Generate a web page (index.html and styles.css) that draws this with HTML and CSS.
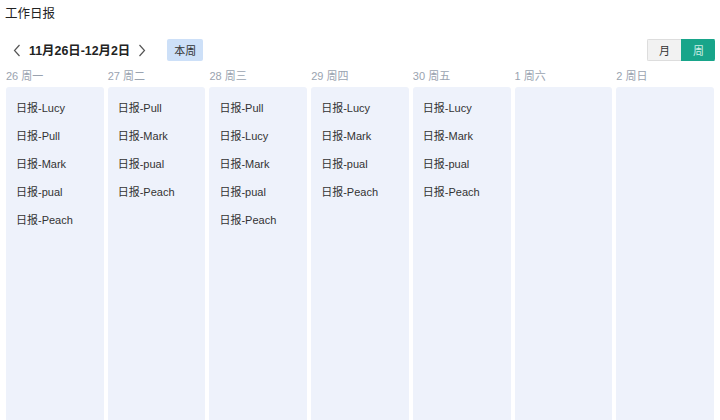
FILE: index.html
```html
<!DOCTYPE html>
<html lang="zh-CN">
<head>
    <meta charset="UTF-8">
    <title>工作日报</title>
    <link rel="stylesheet" href="styles.css">
</head>
<body>
    <div class="page">
        <h1 class="title">工作日报</h1>

        <div class="toolbar">
            <button class="nav-btn" title="上一周">
                <svg width="8" height="13" viewBox="0 0 8 13"><path d="M6.5 1 L1.5 6.5 L6.5 12" fill="none" stroke="#555" stroke-width="1.2"/></svg>
            </button>
            <span class="range">11月26日-12月2日</span>
            <button class="nav-btn" title="下一周">
                <svg width="8" height="13" viewBox="0 0 8 13"><path d="M1.5 1 L6.5 6.5 L1.5 12" fill="none" stroke="#555" stroke-width="1.2"/></svg>
            </button>
            <button class="today-btn">本周</button>

            <div class="switch">
                <button class="switch-item">月</button>
                <button class="switch-item active">周</button>
            </div>
        </div>

        <div class="week">
            <div class="day">
                <div class="day-label">26 周一</div>
                <ul class="day-card">
                    <li>日报-Lucy</li>
                    <li>日报-Pull</li>
                    <li>日报-Mark</li>
                    <li>日报-pual</li>
                    <li>日报-Peach</li>
                </ul>
            </div>
            <div class="day">
                <div class="day-label">27 周二</div>
                <ul class="day-card">
                    <li>日报-Pull</li>
                    <li>日报-Mark</li>
                    <li>日报-pual</li>
                    <li>日报-Peach</li>
                </ul>
            </div>
            <div class="day">
                <div class="day-label">28 周三</div>
                <ul class="day-card">
                    <li>日报-Pull</li>
                    <li>日报-Lucy</li>
                    <li>日报-Mark</li>
                    <li>日报-pual</li>
                    <li>日报-Peach</li>
                </ul>
            </div>
            <div class="day">
                <div class="day-label">29 周四</div>
                <ul class="day-card">
                    <li>日报-Lucy</li>
                    <li>日报-Mark</li>
                    <li>日报-pual</li>
                    <li>日报-Peach</li>
                </ul>
            </div>
            <div class="day">
                <div class="day-label">30 周五</div>
                <ul class="day-card">
                    <li>日报-Lucy</li>
                    <li>日报-Mark</li>
                    <li>日报-pual</li>
                    <li>日报-Peach</li>
                </ul>
            </div>
            <div class="day">
                <div class="day-label">1 周六</div>
                <ul class="day-card"></ul>
            </div>
            <div class="day">
                <div class="day-label">2 周日</div>
                <ul class="day-card"></ul>
            </div>
        </div>
    </div>
</body>
</html>
```

FILE: styles.css
```css
html, body {
    margin: 0;
    height: 100%;
    overflow: hidden;
}
body {
    font-family: "Liberation Sans", "Noto Sans CJK SC", sans-serif;
    background-color: #fff;
    color: #333;
}
.page {
    display: flex;
    flex-direction: column;
    height: 100%;
}
.title {
    margin: 0;
    padding: 4px 5px 0;
    height: 20px;
    line-height: 20px;
    font-size: 12.5px;
    font-weight: normal;
    color: #222;
}
.toolbar {
    display: flex;
    align-items: center;
    height: 22px;
    margin-top: 15px;
    padding: 0 5px 0 11px;
}
.nav-btn {
    display: flex;
    align-items: center;
    justify-content: center;
    width: 12px;
    height: 22px;
    padding: 0;
    background: none;
    border: none;
    cursor: pointer;
}
.range {
    margin: 0 6px;
    font-size: 12.4px;
    font-weight: bold;
    color: #222;
}
.today-btn {
    margin-left: 19px;
    width: 36px;
    height: 22px;
    padding: 0;
    font-family: inherit;
    font-size: 11px;
    color: #333;
    background-color: #cde0f8;
    border: none;
    border-radius: 2px;
    cursor: pointer;
}
.switch {
    display: flex;
    margin-left: auto;
    border-radius: 2px;
    overflow: hidden;
}
.switch-item {
    width: 34px;
    height: 22px;
    padding: 0;
    font-family: inherit;
    font-size: 11px;
    color: #333;
    background-color: #f2f2f2;
    border: 1px solid #ddd;
    border-right: none;
    cursor: pointer;
}
.switch-item.active {
    color: #cfeee6;
    background-color: #18a58a;
    border-color: #18a58a;
}
.week {
    flex: 1;
    display: grid;
    grid-template-columns: repeat(7, 1fr);
    gap: 4px;
    padding: 0 6px;
    margin-top: 7px;
}
.day {
    display: flex;
    flex-direction: column;
}
.day-label {
    height: 17px;
    line-height: 17px;
    font-size: 11px;
    color: #9aa3b0;
}
.day-card {
    flex: 1;
    list-style: none;
    margin: 2px 0 -6px;
    padding: 7px 0 0 10px;
    background-color: #eef2fb;
    border-radius: 3px;
}
.day-card li {
    height: 28px;
    line-height: 28px;
    font-size: 11px;
    color: #333;
}
```
